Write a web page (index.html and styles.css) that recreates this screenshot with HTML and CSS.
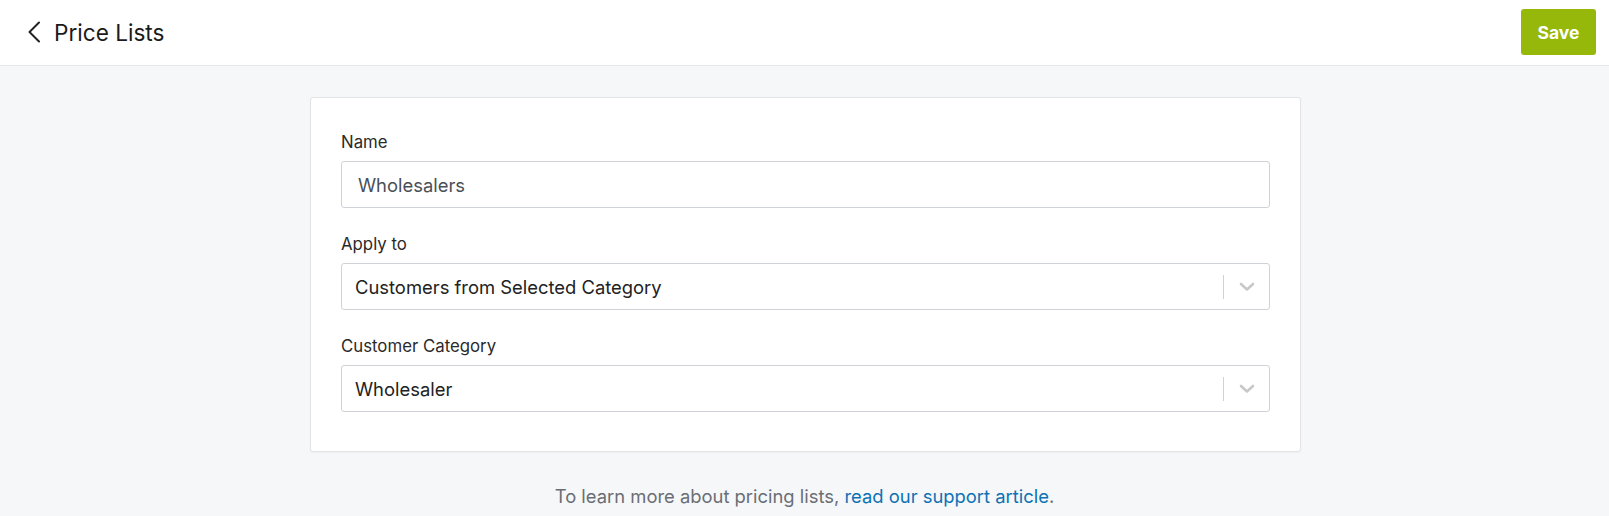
FILE: index.html
```html
<!DOCTYPE html>
<html>
<head>
<meta charset="utf-8">
<link rel="stylesheet" href="styles.css">
</head>
<body>
<header class="topbar">
  <div class="title-group">
    <svg class="back" width="14" height="22" viewBox="0 0 14 22"><path d="M12 1.5 L2.5 11 L12 20.5" fill="none" stroke="#222" stroke-width="2" stroke-linecap="round" stroke-linejoin="round"/></svg>
    <h1 class="title">Price Lists</h1>
  </div>
  <button class="save">Save</button>
</header>
<main class="content">
  <section class="card">
    <div class="field">
      <label class="label">Name</label>
      <div class="input text-input">Wholesalers</div>
    </div>
    <div class="field">
      <label class="label">Apply to</label>
      <div class="input select">
        <span class="value">Customers from Selected Category</span>
        <span class="indicators">
          <span class="sep"></span>
          <svg class="chev" width="16" height="10" viewBox="0 0 16 10"><path d="M2 2 L8 7.5 L14 2" fill="none" stroke="#c8c8c8" stroke-width="2.6" stroke-linecap="round" stroke-linejoin="round"/></svg>
        </span>
      </div>
    </div>
    <div class="field">
      <label class="label">Customer Category</label>
      <div class="input select">
        <span class="value">Wholesaler</span>
        <span class="indicators">
          <span class="sep"></span>
          <svg class="chev" width="16" height="10" viewBox="0 0 16 10"><path d="M2 2 L8 7.5 L14 2" fill="none" stroke="#c8c8c8" stroke-width="2.6" stroke-linecap="round" stroke-linejoin="round"/></svg>
        </span>
      </div>
    </div>
  </section>
  <p class="note">To learn more about pricing lists, <a class="link" href="#">read our support article</a>.</p>
</main>
</body>
</html>
```

FILE: styles.css
```css
* { box-sizing: border-box; }
html, body { margin: 0; padding: 0; }
body {
  background: #f6f7f9;
  font-family: Inter, "Liberation Sans", Arial, sans-serif;
  color: #222;
  height: 516px;
  overflow: hidden;
}
.topbar {
  height: 66px;
  background: #fff;
  border-bottom: 1px solid #e6e8eb;
  display: flex;
  align-items: center;
  justify-content: space-between;
  padding: 0 13px 0 27px;
}
.title-group {
  display: flex;
  align-items: center;
  gap: 13px;
}
.back { display: block; margin-top: -2px; }
.title {
  margin: 0;
  font-size: 22.6px;
  font-weight: 400;
  color: #1b1b1b;
}
.save {
  width: 75px;
  height: 46px;
  margin-top: -1px;
  background: #96b80a;
  border: none;
  border-radius: 3px;
  color: #fff;
  font-family: inherit;
  font-size: 17.5px;
  font-weight: 700;
  padding: 0;
}
.content {
  padding-top: 31px;
}
.card {
  width: 991px;
  margin: 0 auto;
  position: relative;
  left: 1px;
  background: #fff;
  border: 1px solid #e2e4e8;
  border-radius: 3px;
  box-shadow: 0 1px 2px rgba(0,0,0,0.04);
  padding: 34px 30px 39px 30px;
  display: flex;
  flex-direction: column;
  gap: 26px;
}
.field {
  display: flex;
  flex-direction: column;
  gap: 9px;
}
.label {
  font-size: 16.8px;
  line-height: 20px;
  color: #2a2a2a;
}
.input {
  height: 47px;
  border: 1px solid #cfd3d8;
  border-radius: 3px;
  display: flex;
  align-items: center;
  font-size: 18.4px;
  background: #fff;
}
.text-input {
  padding-left: 16px;
  color: #4a4f57;
}
.select {
  padding-left: 13px;
  color: #222;
  justify-content: space-between;
}
.indicators {
  display: flex;
  align-items: center;
  height: 100%;
}
.sep {
  width: 1px;
  height: 24px;
  background: #d2d2d2;
}
.chev {
  display: block;
  margin: 0 14px 0 15px;
}
.note {
  margin: 33px 0 0;
  text-align: center;
  font-size: 18.4px;
  color: #6a6e74;
}
.link {
  color: #0d72b4;
  text-decoration: none;
}
```
